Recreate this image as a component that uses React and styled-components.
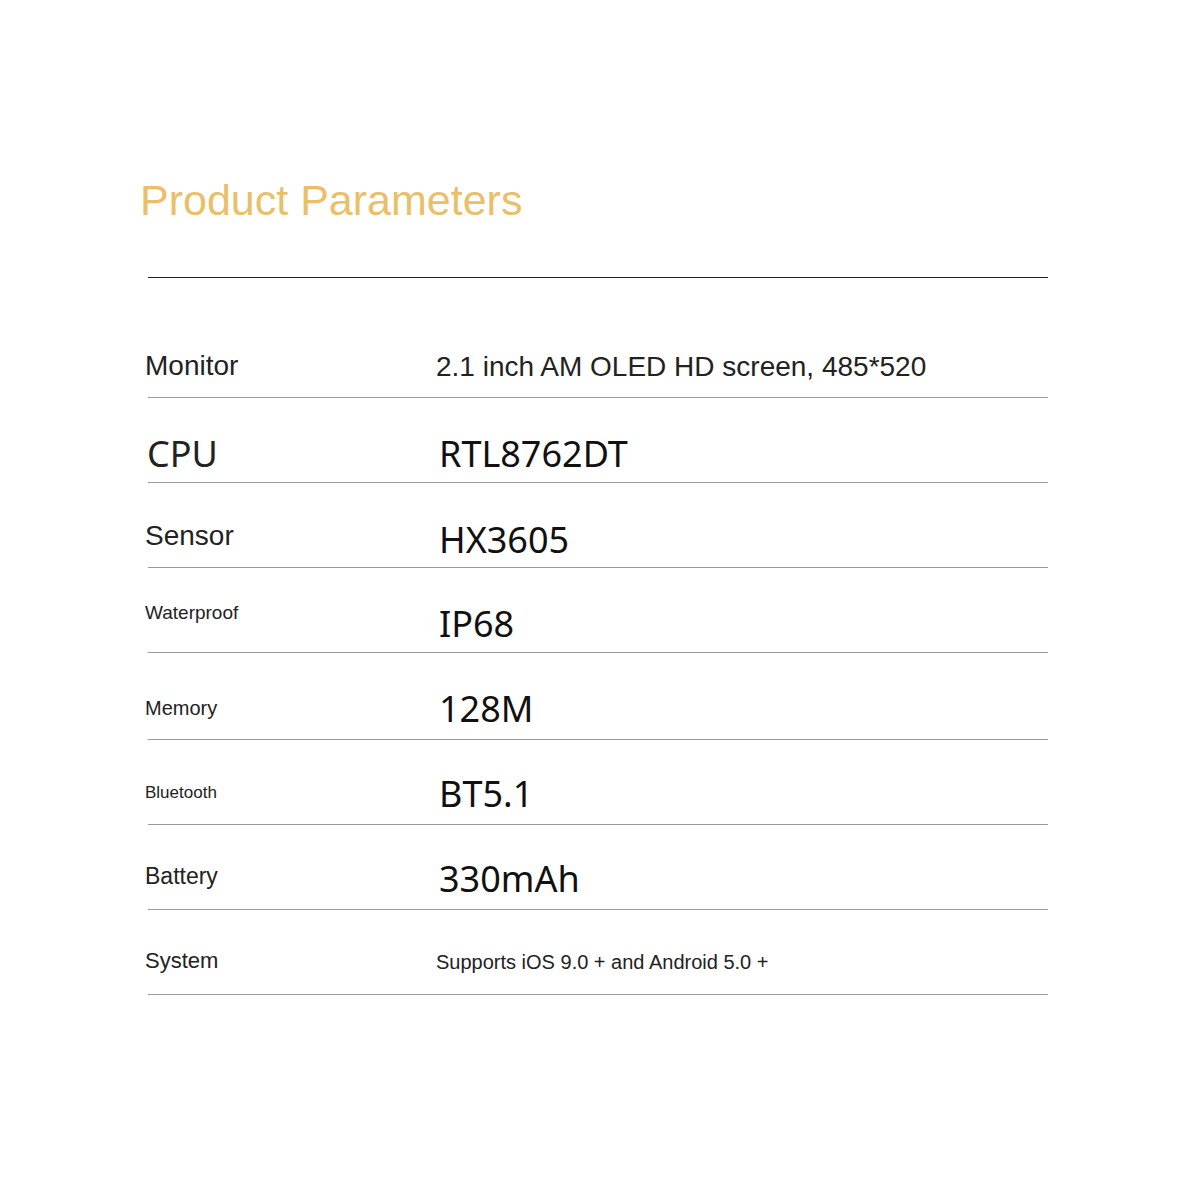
import React from 'react'
import styled, { createGlobalStyle } from 'styled-components'

const GlobalStyle = createGlobalStyle`
    html, body {
        margin: 0;
        padding: 0;
        background: #fff;
    }
`

const rows = [
    { label: 'Monitor', value: '2.1 inch AM OLED HD screen, 485*520', height: 119, lSize: 28, lTop: 74, vKind: 'plain', vSize: 28, vTop: 75 },
    { label: 'CPU', value: 'RTL8762DT', height: 84, lKind: 'noto', lSize: 36, lTop: 38, vTop: 38 },
    { label: 'Sensor', value: 'HX3605', height: 84, lSize: 28, lTop: 39, vTop: 39 },
    { label: 'Waterproof', value: 'IP68', height: 84, lSize: 19, lTop: 35, vTop: 38 },
    { label: 'Memory', value: '128M', height: 86, lSize: 20, lTop: 45, vTop: 38 },
    { label: 'Bluetooth', value: 'BT5.1', height: 84, lSize: 17, lTop: 44, vTop: 36 },
    { label: 'Battery', value: '330mAh', height: 84, lSize: 23, lTop: 40, vTop: 36 },
    { label: 'System', value: 'Supports iOS 9.0 + and Android 5.0 +', height: 84, lSize: 22, lTop: 40, vKind: 'plain', vSize: 20, vTop: 42 },
]

const App = () => {
    return (
        <Page>
            <GlobalStyle />
            <Title>Product Parameters</Title>
            <Table>
                {rows.map((r) => (
                    <Row key={r.label} $height={r.height}>
                        <Label $kind={r.lKind} $size={r.lSize} $top={r.lTop}>{r.label}</Label>
                        <Value $kind={r.vKind} $size={r.vSize} $top={r.vTop}>{r.value}</Value>
                    </Row>
                ))}
            </Table>
        </Page>
    )
}

export default App

const Page = styled.div`
    width: 1200px;
    height: 1200px;
    padding: 179px 0 0 140px;
    box-sizing: border-box;
    background: #fff;
`

const Title = styled.h1`
    margin: 0;
    font-family: "Liberation Sans", Arial, sans-serif;
    font-weight: 400;
    font-size: 43px;
    line-height: 1;
    color: #ebbf6a;
`

const Table = styled.div`
    margin: 55px 0 0 8px;
    width: 900px;
    border-top: 1.5px solid #222;
`

const Row = styled.div`
    display: grid;
    grid-template-columns: 288px 1fr;
    height: ${(p) => p.$height}px;
    border-bottom: 1px solid #9a9a9a;
`

const Cell = styled.div`
    padding-top: ${(p) => p.$top}px;
    line-height: 1;
    white-space: nowrap;
`

const Label = styled(Cell)`
    margin-left: ${(p) => (p.$kind === 'noto' ? '-1px' : '-3px')};
    font-family: ${(p) => (p.$kind === 'noto' ? '"Noto Sans", "Noto Sans CJK SC", sans-serif' : '"Liberation Sans", Arial, sans-serif')};
    font-size: ${(p) => p.$size}px;
    color: #222;
`

const Value = styled(Cell)`
    padding-left: ${(p) => (p.$kind === 'plain' ? '0' : '3px')};
    font-family: ${(p) => (p.$kind === 'plain' ? '"Liberation Sans", Arial, sans-serif' : '"Noto Sans", "Noto Sans CJK SC", sans-serif')};
    font-size: ${(p) => p.$size || 36}px;
    color: ${(p) => (p.$kind === 'plain' ? '#222' : '#111')};
`
